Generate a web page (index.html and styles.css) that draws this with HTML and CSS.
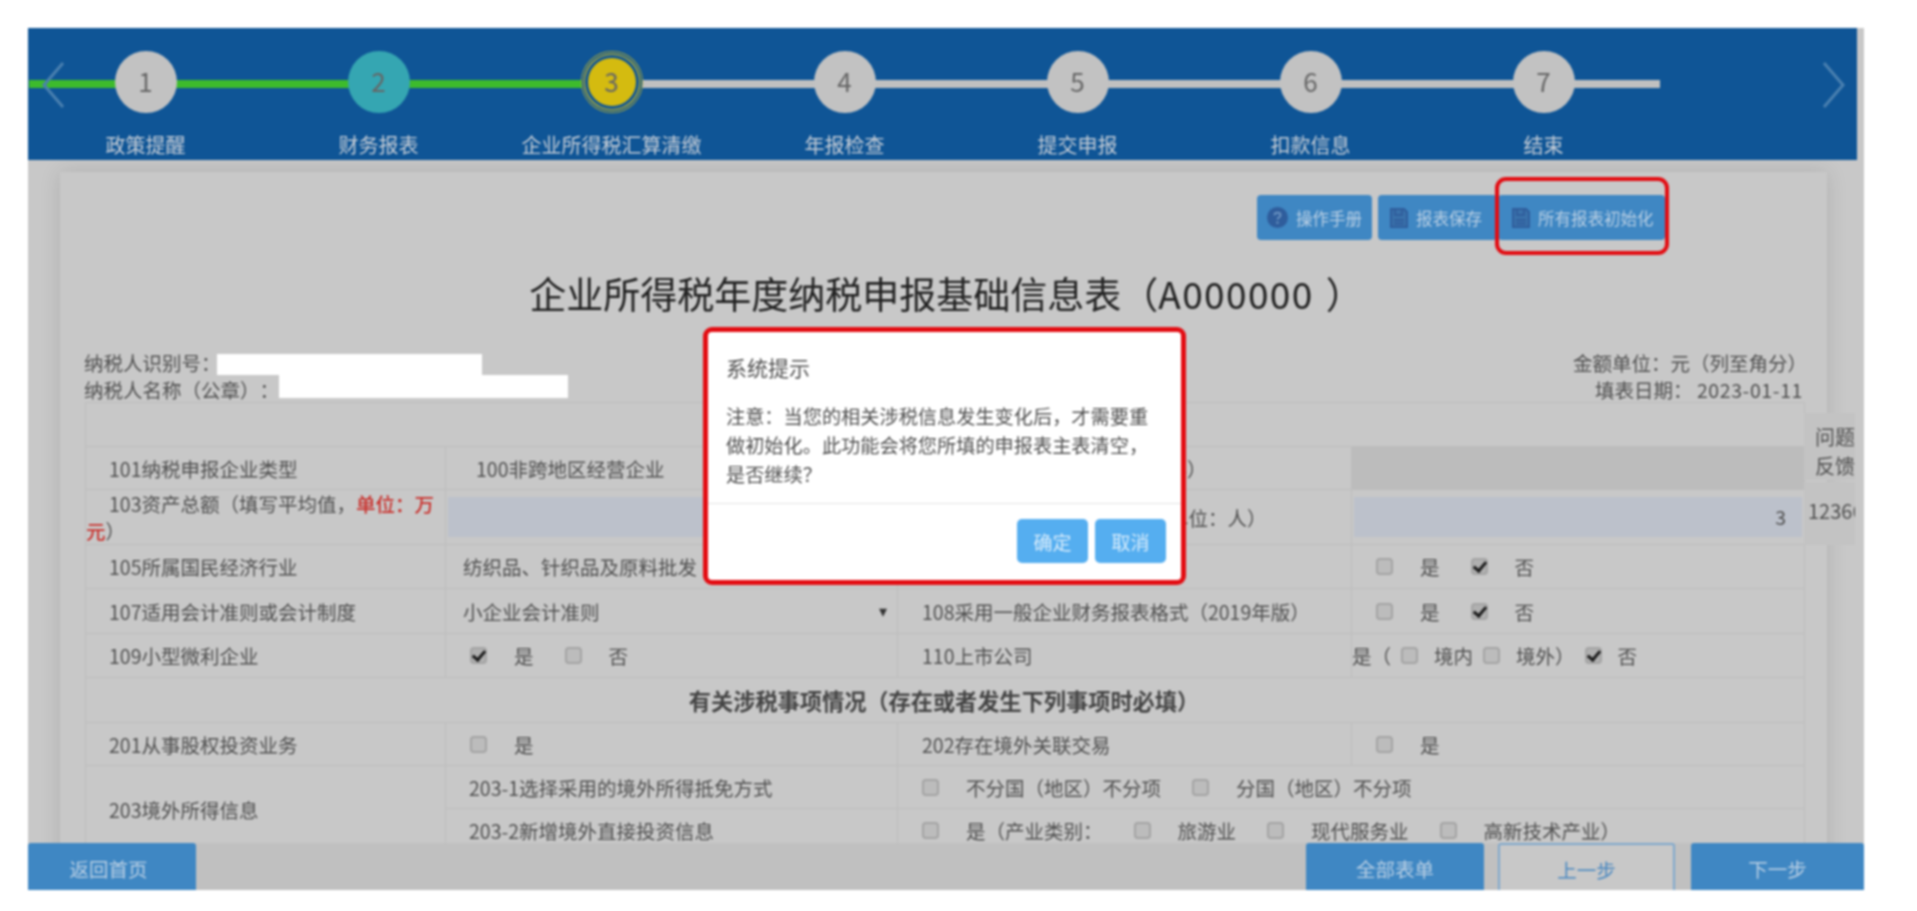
FILE: index.html
```html
<!DOCTYPE html>
<html>
<head>
  <meta charset="UTF-8">
  <link rel="stylesheet" href="styles.css">
</head>
<body>
  <div class="frame">
    <div class="header">
      <svg class="arrow arrow-left" width="25" height="50" viewBox="0 0 25 50"><path d="M22 3 L3 25 L22 47" fill="none" stroke="#4a80b0" stroke-width="3"/></svg>
      <div class="steps">
        <div class="step done"><div class="step-num">1</div><div class="step-name">政策提醒</div></div>
        <div class="step done teal"><div class="step-num">2</div><div class="step-name">财务报表</div></div>
        <div class="step current"><div class="step-num">3</div><div class="step-name">企业所得税汇算清缴</div></div>
        <div class="step"><div class="step-num">4</div><div class="step-name">年报检查</div></div>
        <div class="step"><div class="step-num">5</div><div class="step-name">提交申报</div></div>
        <div class="step"><div class="step-num">6</div><div class="step-name">扣款信息</div></div>
        <div class="step"><div class="step-num">7</div><div class="step-name">结束</div></div>
      </div>
      <svg class="arrow arrow-right" width="25" height="50" viewBox="0 0 25 50"><path d="M3 3 L22 25 L3 47" fill="none" stroke="#4a80b0" stroke-width="3"/></svg>
    </div>

    <div class="panel">
      <div class="toolbar">
        <button class="tool-btn btn-help">
          <svg width="21" height="21" viewBox="0 0 21 21"><circle cx="10.5" cy="10.5" r="10.5" fill="#2f5d9c"/><path d="M7.5 8.2 C7.5 4.8 13.5 4.8 13.5 8.2 C13.5 10.4 10.5 10.2 10.5 12.6" fill="none" stroke="#6f97c4" stroke-width="1.8"/><circle cx="10.5" cy="15.6" r="1.2" fill="#6f97c4"/></svg>
          操作手册
        </button>
        <button class="tool-btn btn-save">
          <svg width="18" height="20" viewBox="0 0 18 20"><path d="M1 1 H14 L17 4 V19 H1 Z" fill="#3a72ab" stroke="#2f5d9c" stroke-width="2"/><path d="M5 1 V7 H12 V1" fill="none" stroke="#2f5d9c" stroke-width="2"/><path d="M4 12 H14 M4 15.5 H14" stroke="#2f5d9c" stroke-width="2"/></svg>
          报表保存
        </button>
        <button class="tool-btn marked">
          <svg width="18" height="20" viewBox="0 0 18 20"><path d="M1 1 H14 L17 4 V19 H1 Z" fill="#3a72ab" stroke="#2f5d9c" stroke-width="2"/><path d="M5 1 V7 H12 V1" fill="none" stroke="#2f5d9c" stroke-width="2"/><path d="M4 12 H14 M4 15.5 H14" stroke="#2f5d9c" stroke-width="2"/></svg>
          所有报表初始化
        </button>
      </div>

      <h1 class="form-title">企业所得税年度纳税申报基础信息表（<span class="form-code">A000000</span>）</h1>

      <div class="form-info">
        <div>
          <div class="info-line">纳税人识别号：<span class="hidden-id"></span></div>
          <div class="info-line">纳税人名称（公章）：<span class="hidden-name"></span></div>
        </div>
        <div class="info-right">
          <div class="info-line info-unit">金额单位：元（列至角分）</div>
          <div class="info-line">填表日期：&nbsp;<span class="info-date">2023-01-11</span></div>
        </div>
      </div>

      <table class="form-table">
        <colgroup>
          <col class="col-a"><col class="col-b"><col class="col-c"><col class="col-d">
        </colgroup>
        <tr class="row-blank"><td colspan="4"></td></tr>
        <tr class="row-43">
          <td class="name">101纳税申报企业类型</td>
          <td class="wide-pad">100非跨地区经营企业</td>
          <td class="pad">102分支机构就地纳税比例（%）</td>
          <td class="locked"></td>
        </tr>
        <tr class="row-55">
          <td class="name">103资产总额（填写平均值，<b class="unit">单位：万元</b>）</td>
          <td class="field-cell"><div class="field"></div></td>
          <td class="pad">104从业人数（填写平均值，单位：人）</td>
          <td class="field-cell"><div class="field">3</div></td>
        </tr>
        <tr>
          <td class="name">105所属国民经济行业</td>
          <td class="pad-s">纺织品、针织品及原料批发</td>
          <td class="pad">106从事国家限制或禁止行业</td>
          <td class="pad"><div class="opts"><input type="checkbox"><span>是</span><input type="checkbox" checked><span>否</span></div></td>
        </tr>
        <tr class="row-45">
          <td class="name">107适用会计准则或会计制度</td>
          <td class="pad-s"><div class="fake-select">小企业会计准则<span class="caret">▾</span></div></td>
          <td class="pad">108采用一般企业财务报表格式（2019年版）</td>
          <td class="pad"><div class="opts"><input type="checkbox"><span>是</span><input type="checkbox" checked><span>否</span></div></td>
        </tr>
        <tr>
          <td class="name">109小型微利企业</td>
          <td class="pad"><div class="opts"><input type="checkbox" checked><span>是</span><input type="checkbox"><span>否</span></div></td>
          <td class="pad">110上市公司</td>
          <td><div class="opts tight">是（<input type="checkbox"><span>境内</span><input type="checkbox"><span>境外</span>）<input type="checkbox" checked><span>否</span></div></td>
        </tr>
        <tr class="row-45">
          <td colspan="4" class="section">有关涉税事项情况（存在或者发生下列事项时必填）</td>
        </tr>
        <tr class="row-43">
          <td class="name">201从事股权投资业务</td>
          <td class="pad"><div class="opts"><input type="checkbox"><span>是</span></div></td>
          <td class="pad">202存在境外关联交易</td>
          <td class="pad"><div class="opts"><input type="checkbox"><span>是</span></div></td>
        </tr>
        <tr class="row-43">
          <td class="name" rowspan="2">203境外所得信息</td>
          <td class="pad-m">203-1选择采用的境外所得抵免方式</td>
          <td class="pad" colspan="2"><div class="opts"><input type="checkbox"><span>不分国（地区）不分项</span><input type="checkbox"><span>分国（地区）不分项</span></div></td>
        </tr>
        <tr>
          <td class="pad-m">203-2新增境外直接投资信息</td>
          <td class="pad" colspan="2"><div class="opts"><input type="checkbox"><span>是（产业类别：</span><input type="checkbox"><span>旅游业</span><input type="checkbox"><span>现代服务业</span><input type="checkbox"><span>高新技术产业）</span></div></td>
        </tr>
      </table>
    </div>

    <div class="side-tab tab-feedback">问题反馈</div>
    <div class="side-tab tab-phone">12366</div>

    <div class="dialog">
      <div class="dialog-title">系统提示</div>
      <div class="dialog-body">注意：当您的相关涉税信息发生变化后，才需要重做初始化。此功能会将您所填的申报表主表清空，是否继续？</div>
      <div class="dialog-foot">
        <button class="dialog-btn">确定</button>
        <button class="dialog-btn">取消</button>
      </div>
    </div>

    <div class="footer">
      <button class="foot-btn foot-home">返回首页</button>
      <div class="foot-right">
        <button class="foot-btn foot-all">全部表单</button>
        <button class="foot-btn foot-prev">上一步</button>
        <button class="foot-btn foot-next">下一步</button>
      </div>
    </div>
  </div>
</body>
</html>
```

FILE: styles.css
```css
* {
  margin: 0;
  padding: 0;
  box-sizing: border-box;
}

body {
  padding: 28px 0 0 28px;
  height: 911px;
  overflow: hidden;
  background-color: white;
  font-family: "Noto Sans CJK SC", "Noto Sans", sans-serif;
  color: #505050;
}

button {
  border: none;
  font-family: inherit;
}

.frame {
  position: relative;
  width: 1836px;
  height: 862px;
  overflow: hidden;
  background-color: #c8c8c8;
  filter: blur(1px);
}

/* steps */
.header {
  position: relative;
  width: 1829px;
  height: 132px;
  padding: 23px 0 0 1px;
  background-color: #0f5596;
}

.arrow {
  position: absolute;
  top: 32px;
  z-index: 2;
}

.arrow-left {
  left: 13px;
}

.arrow-right {
  left: 1793px;
}

.steps {
  display: flex;
}

.step {
  position: relative;
  width: 233px;
  display: flex;
  flex-direction: column;
  align-items: center;
}

.step::before {
  content: "";
  position: absolute;
  left: 0;
  right: 0;
  top: 29px;
  height: 8px;
  background-color: #c0c0c0;
}

.step.done::before {
  background-color: #3dbb2c;
}

.step.current::before {
  background: linear-gradient(to right, #3dbb2c 50%, #c0c0c0 50%);
}

.step-num {
  position: relative;
  width: 62px;
  height: 62px;
  border-radius: 50%;
  background-color: #c2c2c2;
  color: #666;
  font-size: 26px;
  line-height: 60px;
  text-align: center;
}

.teal .step-num {
  background-color: #35a6b2;
}

.current .step-num {
  width: 48px;
  height: 48px;
  margin: 7px 0;
  line-height: 46px;
  background-color: #d4bb10;
  box-shadow: 0 0 0 3px #0f5596, 0 0 0 4.5px #a5a63c, 0 0 0 6px #0f5596, 0 0 0 7px #a5a63c;
}

.step-name {
  margin-top: 20px;
  font-size: 20px;
  line-height: 24px;
  color: #c4ccd6;
  white-space: nowrap;
}

/* form panel */
.panel {
  width: 1767px;
  height: 718px;
  margin: 12px 0 0 32px;
  padding: 23px 0 0 25px;
  background-color: #c8c8c8;
  box-shadow: 0 0 20px rgba(0, 0, 0, 0.12);
  overflow: hidden;
}

.toolbar {
  display: flex;
  justify-content: flex-end;
  gap: 6px;
  padding-right: 162px;
}

.tool-btn {
  position: relative;
  display: flex;
  align-items: center;
  gap: 8px;
  height: 45px;
  border-radius: 4px;
  background-color: #3f87c3;
  color: #b9cfe4;
  font-size: 16.5px;
}

.btn-help {
  width: 115px;
  padding-left: 10px;
}

.btn-save {
  width: 119px;
  padding-left: 12px;
}

.tool-btn.marked {
  width: 167px;
  margin-left: -5px;
  padding-left: 14px;
}

.tool-btn.marked::after {
  content: "";
  position: absolute;
  left: -3px;
  right: -4px;
  top: -18px;
  bottom: -15px;
  border: 4px solid #e30c12;
  border-radius: 11px;
}

.form-title {
  margin-top: 27px;
  padding-right: 20px;
  font-size: 37px;
  line-height: 52px;
  font-weight: 400;
  text-align: center;
  color: #222;
}

.form-code {
  margin-right: 12px;
  letter-spacing: 1.4px;
}

.form-info {
  display: flex;
  justify-content: space-between;
  margin: 30px 0 -1px;
  width: 1719px;
  font-size: 19.5px;
  line-height: 27px;
  text-spacing-trim: space-all;
}

.info-line {
  display: flex;
  height: 27px;
  margin-left: -1px;
}

.info-right {
  text-align: right;
}

.info-right .info-line {
  justify-content: flex-end;
  padding-right: 1px;
}

.info-right .info-unit {
  margin-right: -4px;
}

.info-date {
  letter-spacing: 0.6px;
}

.hidden-id {
  width: 265px;
  height: 21px;
  margin: 5px 0 0 -4px;
  background-color: white;
}

.hidden-name {
  width: 289px;
  height: 23px;
  margin-top: -1px;
  background-color: white;
}

.form-table {
  width: 1719px;
  table-layout: fixed;
  border-collapse: collapse;
  font-size: 19.5px;
  line-height: 27px;
}

.form-table td {
  height: 44px;
  border: 1px solid #bdbdbd;
  vertical-align: middle;
  white-space: nowrap;
}

.col-a {
  width: 360px;
}

.col-b {
  width: 452px;
}

.col-c {
  width: 454px;
}

.col-d {
  width: 453px;
}

.form-table .row-43 td {
  height: 43px;
}

.form-table .row-45 td {
  height: 45px;
}

.form-table .row-55 td {
  height: 55px;
}

.form-table td.name {
  text-indent: 23px;
  white-space: normal;
}

.unit {
  font-weight: 500;
  color: #c9302c;
}

.form-table td.pad {
  padding-left: 24px;
}

.form-table td.wide-pad {
  padding-left: 30px;
}

.form-table td.pad-s {
  padding-left: 17px;
}

.form-table td.pad-m {
  padding-left: 23px;
}

.form-table td.locked {
  background-color: #bcbcbc;
}

.form-table td.field-cell {
  padding: 0 2px;
}

.field {
  height: 40px;
  padding-right: 16px;
  line-height: 40px;
  text-align: right;
  background-color: #bcc1cb;
}

.fake-select {
  display: flex;
  justify-content: space-between;
  align-items: center;
}

.caret {
  margin-right: 10px;
  font-family: "DejaVu Sans", sans-serif;
  font-size: 16px;
  color: #333;
}

.form-table td.section {
  text-align: center;
  font-size: 22.2px;
  font-weight: 700;
  color: #444;
  padding-right: 2px;
}

.opts {
  display: flex;
  align-items: center;
}

.opts input {
  position: relative;
  flex: none;
  appearance: none;
  width: 17px;
  height: 17px;
  margin: 0 27px 0 31px;
  border: 2px solid #a4a4a4;
  border-radius: 4px;
  background-color: #bcbcbc;
}

.opts input:first-child {
  margin-left: 0;
}

.opts input:checked {
  background-color: #b0b0b0;
}

.opts input:checked::after {
  content: "";
  position: absolute;
  left: 3px;
  top: -1px;
  width: 5px;
  height: 10px;
  border: solid #1c1c1c;
  border-width: 0 3px 3px 0;
  transform: rotate(40deg);
}

.opts.tight input {
  margin: 0 16px 0 10px;
}

.opts.tight span + input {
  margin-left: 10px;
}

/* tabs on the right edge */
.side-tab {
  position: absolute;
  left: 1776px;
  width: 51px;
  background-color: #c3c3c3;
  font-size: 20px;
}

.tab-feedback {
  top: 385px;
  height: 67px;
  padding: 9px 0 0 11px;
  line-height: 29px;
}

.tab-phone {
  top: 454px;
  height: 63px;
  padding: 14px 0 0 4px;
  overflow: hidden;
  white-space: nowrap;
}

/* dialog */
.dialog {
  position: absolute;
  left: 675px;
  top: 299px;
  width: 483px;
  height: 258px;
  border: 5px solid #e30c12;
  border-radius: 9px;
  background-color: white;
  z-index: 3;
}

.dialog-title {
  padding: 20px 18px 0;
  font-size: 21px;
  line-height: 30px;
}

.dialog-body {
  margin-top: 20px;
  padding: 0 18px;
  width: 470px;
  font-size: 19.2px;
  line-height: 29px;
}

.dialog-foot {
  display: flex;
  justify-content: flex-end;
  gap: 7px;
  margin-top: 14px;
  padding: 15px 15px 0 0;
  border-top: 1px solid #e4e4e4;
}

.dialog-btn {
  width: 71px;
  height: 44px;
  border-radius: 5px;
  background-color: #55aef0;
  color: #d8ecfb;
  font-size: 19px;
}

/* bottom bar */
.footer {
  position: absolute;
  left: 0;
  right: 0;
  bottom: 0;
  height: 47px;
  display: flex;
  justify-content: space-between;
  background-color: #c0c0c0;
  z-index: 2;
}

.foot-right {
  display: flex;
  gap: 14px;
}

.foot-btn {
  height: 47px;
  padding-top: 4px;
  background-color: #3f87c3;
  color: #b9cfe4;
  font-size: 19.5px;
  border-radius: 3px 3px 0 0;
}

.foot-home {
  width: 168px;
  padding-right: 7px;
}

.foot-all {
  width: 178px;
}

.foot-prev {
  width: 177px;
  margin-right: 2px;
  border: 2px solid #7fa8cc;
  border-bottom: none;
  background-color: #c8c8c8;
  color: #4a88c0;
}

.foot-next {
  width: 173px;
}
```
